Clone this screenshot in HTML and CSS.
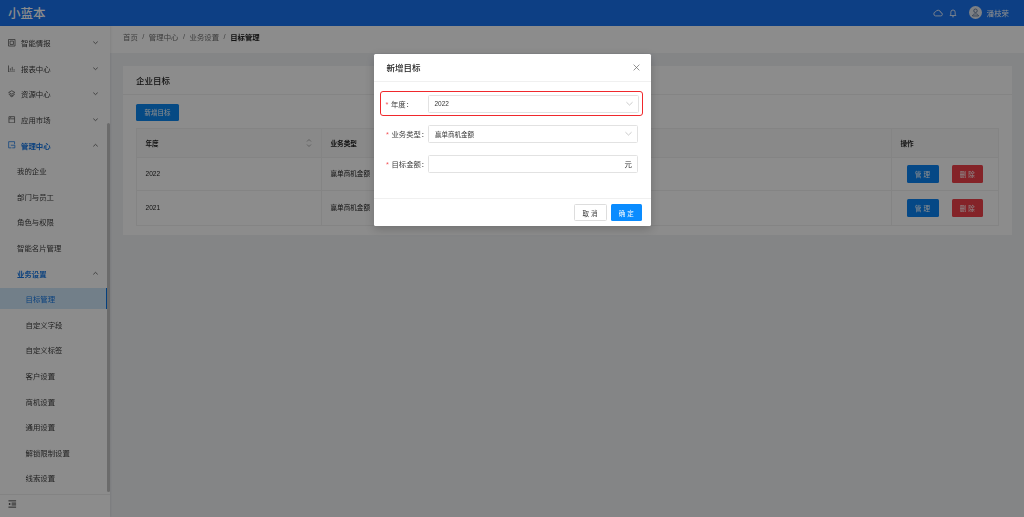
FILE: index.html
```html
<!DOCTYPE html>
<html lang="zh-CN">
<head>
    <meta charset="UTF-8">
    <title>目标管理</title>
    <link rel="stylesheet" href="styles.css">
</head>
<body>
    <header class="topbar">
        <div class="logo">小蓝本</div>
        <div class="topbar-right">
            <svg class="top-icon" viewBox="0 0 12 12"><path d="M3 9.500h6a2 2 0 0 0 .4-4A3.400 3.400 0 0 0 3 4.600 2.500 2.500 0 0 0 3 9.500z"/></svg>
            <svg class="top-icon" viewBox="0 0 12 12"><path d="M2.500 9h7L8.600 7.500V5a2.600 2.600 0 0 0-5.200 0v2.500zM5 10.500h2"/></svg>
            <div class="avatar"><svg viewBox="0 0 12 12"><path d="M6 6a1.600 1.600 0 1 0 0-3.200A1.600 1.600 0 0 0 6 6zM3.200 9.200c.3-2.600 5.300-2.600 5.600 0z"/></svg></div>
            <span class="username">潘枝荣</span>
        </div>
    </header>

    <div class="layout">
        <aside class="sidebar">
            <nav class="menu">
                <div class="menu-item">
                    <svg class="menu-icon" viewBox="0 0 8 8"><path d="M.5.5h7v7h-7zM2.200 2.200h3.600v3.600H2.200z"/></svg>
                    <span>智能情报</span>
                    <svg class="chevron" viewBox="0 0 8 8"><path d="M1.500 3l2.500 2.300L6.500 3"/></svg>
                </div>
                <div class="menu-item">
                    <svg class="menu-icon" viewBox="0 0 8 8"><path d="M.5.5v7h7M2.500 6V3.500M4.500 6V2M6.500 6V4.500"/></svg>
                    <span>报表中心</span>
                    <svg class="chevron" viewBox="0 0 8 8"><path d="M1.500 3l2.500 2.300L6.500 3"/></svg>
                </div>
                <div class="menu-item">
                    <svg class="menu-icon" viewBox="0 0 8 8"><path d="M4 .8l3.300 1.800L4 4.400.7 2.600zM.7 4.400L4 6.200l3.300-1.800M2 6l2 1.200L6 6"/></svg>
                    <span>资源中心</span>
                    <svg class="chevron" viewBox="0 0 8 8"><path d="M1.500 3l2.500 2.300L6.500 3"/></svg>
                </div>
                <div class="menu-item">
                    <svg class="menu-icon" viewBox="0 0 8 8"><path d="M1 .7h6v6.600H1zM1 3h6M2.800 1v1"/></svg>
                    <span>应用市场</span>
                    <svg class="chevron" viewBox="0 0 8 8"><path d="M1.500 3l2.500 2.300L6.500 3"/></svg>
                </div>
                <div class="menu-item active">
                    <svg class="menu-icon" viewBox="0 0 8 8"><path d="M7 3.500V.7H.7v6.600h3M3 4.500h4.300v2.800H4.500"/></svg>
                    <span>管理中心</span>
                    <svg class="chevron" viewBox="0 0 8 8"><path d="M1.500 5l2.500-2.300L6.500 5"/></svg>
                </div>
                <div class="menu-item sub">我的企业</div>
                <div class="menu-item sub">部门与员工</div>
                <div class="menu-item sub">角色与权限</div>
                <div class="menu-item sub">智能名片管理</div>
                <div class="menu-item sub active">
                    <span>业务设置</span>
                    <svg class="chevron" viewBox="0 0 8 8"><path d="M1.500 5l2.500-2.300L6.500 5"/></svg>
                </div>
                <div class="menu-item leaf selected">目标管理</div>
                <div class="menu-item leaf">自定义字段</div>
                <div class="menu-item leaf">自定义标签</div>
                <div class="menu-item leaf">客户设置</div>
                <div class="menu-item leaf">商机设置</div>
                <div class="menu-item leaf">通用设置</div>
                <div class="menu-item leaf">解锁限制设置</div>
                <div class="menu-item leaf">线索设置</div>
            </nav>
            <div class="scrollbar"></div>
            <div class="sidebar-foot">
                <svg viewBox="0 0 10 8"><path d="M.5.5h8.500M4 3h5M4 5h5M.5 7.500h8.500"/><path class="fill" d="M2.500 2.500v3L.5 4z"/></svg>
            </div>
        </aside>

        <main class="main">
            <div class="breadcrumb">
                <span>首页</span><i>/</i><span>管理中心</span><i>/</i><span>业务设置</span><i>/</i><b>目标管理</b>
            </div>
            <section class="card">
                <h2 class="card-title">企业目标</h2>
                <div class="card-body">
                    <button class="btn btn-primary btn-add">新增目标</button>
                    <table class="target-table">
                        <colgroup><col class="col-year"><col><col class="col-op"></colgroup>
                        <thead>
                            <tr>
                                <th>
                                    <div class="th-sort">年度
                                        <svg viewBox="0 0 6 10"><path d="M1 3.500l2-2 2 2M1 6.500l2 2 2-2"/></svg>
                                    </div>
                                </th>
                                <th>业务类型</th>
                                <th>操作</th>
                            </tr>
                        </thead>
                        <tbody>
                            <tr class="row-first">
                                <td class="cell-text">2022</td>
                                <td class="cell-text">赢单商机金额</td>
                                <td><div class="ops"><button class="btn btn-blue">管 理</button><button class="btn btn-red">删 除</button></div></td>
                            </tr>
                            <tr class="row-second">
                                <td class="cell-text">2021</td>
                                <td class="cell-text">赢单商机金额</td>
                                <td><div class="ops"><button class="btn btn-blue">管 理</button><button class="btn btn-red">删 除</button></div></td>
                            </tr>
                        </tbody>
                    </table>
                </div>
            </section>
        </main>
    </div>

    <div class="overlay">
        <div class="modal">
            <div class="modal-head">
                <span>新增目标</span>
                <svg viewBox="0 0 8 8"><path d="M.7.7l6.600 6.600M7.300.7L.7 7.300"/></svg>
            </div>
            <form class="modal-body">
                <div class="form-row highlight">
                    <label><em>*</em>年度：</label>
                    <div class="field"><span>2022</span><svg viewBox="0 0 8 8"><path d="M.5 2.500L4 5.800l3.500-3.300"/></svg></div>
                </div>
                <div class="form-row">
                    <label><em>*</em>业务类型：</label>
                    <div class="field"><span>赢单商机金额</span><svg viewBox="0 0 8 8"><path d="M.5 2.500L4 5.800l3.500-3.300"/></svg></div>
                </div>
                <div class="form-row">
                    <label><em>*</em>目标金额：</label>
                    <div class="field"><span></span><span class="unit">元</span></div>
                </div>
            </form>
            <div class="modal-foot">
                <button class="btn btn-default">取 消</button>
                <button class="btn btn-ok">确 定</button>
            </div>
        </div>
    </div>
</body>
</html>
```

FILE: styles.css
```css
* {
    box-sizing: border-box;
}

html, body {
    height: 100%;
}

body {
    margin: 0;
    overflow: hidden;
    position: relative;
    font-family: "Liberation Sans", "Noto Sans CJK SC", sans-serif;
    font-size: 7.4px;
    color: #222;
    background-color: #f0f2f5;
    filter: blur(.35px);
}

button {
    font-family: inherit;
    border: none;
}

/* Top bar */
.topbar {
    height: 25.5px;
    background-color: #1873f0;
    color: #fff;
    display: flex;
    align-items: center;
    justify-content: space-between;
    padding: 0 15px 0 8px;
}

.logo {
    font-size: 12.500px;
    font-weight: 500;
}

.topbar-right {
    display: flex;
    align-items: center;
}

.top-icon {
    width: 10px;
    height: 10px;
    margin-right: 5px;
    fill: none;
    stroke: #fff;
    stroke-width: 1;
}

.avatar {
    width: 13px;
    height: 13px;
    margin-left: 6.500px;
    margin-right: 4.500px;
    border-radius: 50%;
    background-color: #e4e9f0;
    display: flex;
}

.avatar svg {
    fill: none;
    stroke: #5a7398;
    stroke-width: .8;
}

/* Page layout */
.layout {
    display: flex;
    height: calc(100% - 25.5px);
}

/* Sidebar */
.sidebar {
    width: 110px;
    flex-shrink: 0;
    background-color: #fff;
    position: relative;
    display: flex;
    flex-direction: column;
    box-shadow: 1px 0 2px rgba(0, 0, 0, .08);
}

.menu {
    flex: 1;
    width: 107px;
    padding-top: 4.500px;
}

.menu-item {
    height: 25.600px;
    display: flex;
    align-items: center;
    padding-left: 8px;
    color: #3c3c3c;
}

.menu-icon {
    width: 7.500px;
    height: 7.500px;
    margin-right: 5.500px;
    fill: none;
    stroke: #555;
    stroke-width: .8;
}

.chevron {
    width: 7px;
    height: 7px;
    margin-left: auto;
    margin-right: 8.500px;
    fill: none;
    stroke: #555;
    stroke-width: .9;
}

.menu-item.active {
    color: #1677e5;
    font-weight: 700;
}

.menu-item.active .menu-icon {
    stroke: #1677e5;
}

.menu-item.sub {
    padding-left: 17px;
}

.menu-item.leaf {
    padding-left: 25.500px;
}

.menu-item.selected {
    height: 21px;
    margin: 2.300px 0;
    color: #1677e5;
    background-color: #d0e8fa;
    border-right: 1.500px solid #0a76e6;
}

.scrollbar {
    position: absolute;
    top: 97px;
    right: 0;
    width: 3px;
    height: 369px;
    background-color: #c4c4c4;
    border-radius: 2px;
}

.sidebar-foot {
    height: 23px;
    border-top: 1px solid #eee;
    padding: 5px 8px;
}

.sidebar-foot svg {
    width: 9px;
    height: 8px;
    display: block;
    fill: none;
    stroke: #222;
    stroke-width: .9;
}

.sidebar-foot .fill {
    fill: #222;
    stroke: none;
}

/* Main area */
.main {
    flex: 1;
    min-width: 0;
}

.breadcrumb {
    height: 27px;
    background-color: #fff;
    display: flex;
    align-items: center;
    padding-left: 13px;
    padding-bottom: 4.500px;
    color: #707070;
}

.breadcrumb i {
    font-style: normal;
    margin: 0 4.500px;
}

.breadcrumb b {
    color: #222;
}

.card {
    background-color: #fff;
    margin: 13px 12px 0 13px;
}

.card-title {
    margin: 0;
    height: 29px;
    padding-left: 13px;
    display: flex;
    align-items: center;
    font-size: 8.500px;
    font-weight: 500;
    color: #222;
    border-bottom: 1px solid #f0f0f0;
}

.card-body {
    padding: 9px 13px 9px;
}

/* Buttons */
.btn {
    display: inline-flex;
    align-items: center;
    justify-content: center;
    font-size: 6.500px;
    height: 17.500px;
    border-radius: 1.500px;
    color: #fff;
    padding: 0;
}

.btn-primary {
    width: 43px;
    background-color: #0c87f0;
}

.btn-add {
    display: flex;
    margin-bottom: 7px;
}

.btn-blue {
    width: 32px;
    background-color: #0a84f5;
}

.btn-red {
    width: 31.500px;
    background-color: #f0404a;
}

.btn-default {
    width: 33px;
    background-color: #fff;
    color: #333;
    border: 1px solid #ddd;
}

.btn-ok {
    width: 31.500px;
    background-color: #0a8cff;
}

/* Table */
.target-table {
    width: 100%;
    table-layout: fixed;
    border-collapse: collapse;
    border: 1px solid #f0f0f0;
}

.col-year {
    width: 185px;
}

.col-op {
    width: 107px;
}

.target-table th,
.target-table td {
    border: 1px solid #f0f0f0;
    padding: 0 8.500px;
    text-align: left;
    font-size: 6.600px;
    color: #222;
}

.target-table th {
    height: 29px;
    font-weight: 700;
    background-color: #fafafa;
    padding-bottom: 1px;
}

.target-table .cell-text {
    padding-bottom: 2px;
}

.row-first td {
    height: 33px;
}

.row-second td {
    height: 35px;
}

.th-sort {
    display: flex;
    align-items: center;
    justify-content: space-between;
    padding-right: 1px;
}

.th-sort svg {
    width: 6px;
    height: 10px;
    fill: none;
    stroke: #999;
    stroke-width: .8;
}

.ops {
    display: flex;
    gap: 13px;
    padding-left: 6px;
}

/* Modal */
.overlay {
    position: absolute;
    inset: 0;
    background-color: rgba(0, 0, 0, .45);
    display: flex;
    justify-content: center;
    align-items: flex-start;
    padding-top: 53.500px;
}

.modal {
    width: 277px;
    height: 172.500px;
    background-color: #fff;
    border-radius: 1.500px;
    box-shadow: 0 3px 10px rgba(0, 0, 0, .2);
    display: flex;
    flex-direction: column;
}

.modal-head {
    height: 28.500px;
    flex-shrink: 0;
    display: flex;
    align-items: center;
    justify-content: space-between;
    padding: 0 11px 0 13px;
    font-size: 8.500px;
    font-weight: 500;
    border-bottom: 1px solid #f0f0f0;
}

.modal-head svg {
    width: 7px;
    height: 7px;
    fill: none;
    stroke: #666;
    stroke-width: .8;
}

.modal-body {
    flex: 1;
    padding: 9px 8px 0 6.500px;
    display: flex;
    flex-direction: column;
    gap: 5px;
}

.form-row {
    height: 25px;
    display: flex;
    align-items: center;
    padding: 0 4.500px 0 6px;
}

.form-row.highlight {
    border: 1.500px solid #f0282c;
    border-radius: 3px;
    padding: 0 3px 0 4.500px;
}

.form-row label {
    width: 42px;
    flex-shrink: 0;
    white-space: nowrap;
    color: #3c3c3c;
}

.form-row em {
    font-style: normal;
    color: #f5555a;
    margin-right: 2.500px;
}

.field {
    flex: 1;
    height: 18px;
    border: 1px solid #e2e2e2;
    border-radius: 1.500px;
    display: flex;
    align-items: center;
    justify-content: space-between;
    padding: 0 5px 0 6px;
    font-size: 6.500px;
    color: #333;
}

.field svg {
    width: 7px;
    height: 7px;
    fill: none;
    stroke: #aaa;
    stroke-width: .7;
}

.field .unit {
    font-size: 7.400px;
}

.modal-foot {
    height: 28px;
    border-top: 1px solid #f0f0f0;
    display: flex;
    justify-content: flex-end;
    align-items: center;
    gap: 4px;
    padding: 0 8.500px;
}
```
